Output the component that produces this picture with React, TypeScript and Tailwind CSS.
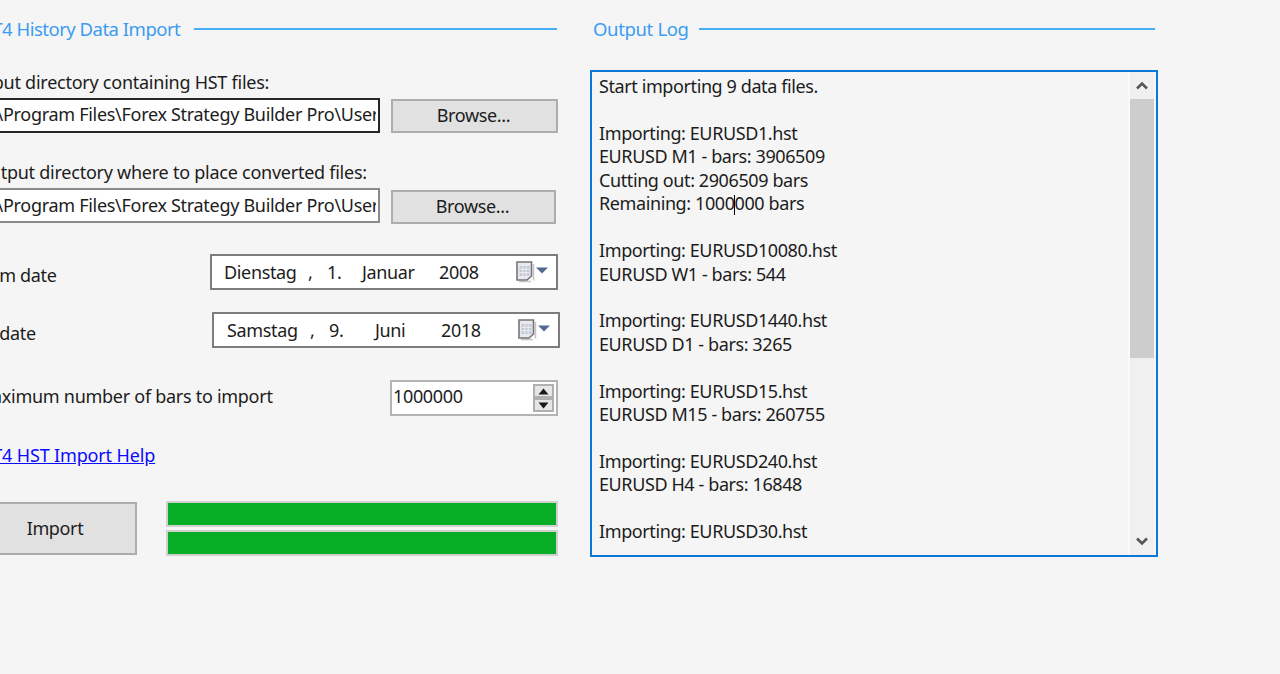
import React from "react";

const font = "font-['Noto_Sans','Open_Sans',sans-serif]";

function Heading({ text, gap, tracking }: { text: string; gap: string; tracking: string }) {
  return (
    <div className="flex items-center h-5">
      <span className={`text-[#3b9cf2] whitespace-nowrap text-[18.5px] ${tracking}`}>{text}</span>
      <div className={`flex-1 h-[2px] bg-[#45aef5] ${gap}`} />
    </div>
  );
}

function Calendar() {
  return (
    <svg width="34" height="22" viewBox="0 0 34 22" className="shrink-0">
      <path d="M17.5 19.5 L17.5 3 M3 20.5 H15" stroke="#c4c4c4" strokeWidth="1.5" />
      <path d="M1 1 H15.5 V15 L11 19 H1 Z" fill="#e9e9ee" stroke="#77737a" strokeWidth="1.6" />
      <rect x="3.5" y="5" width="10" height="10" fill="#c2c8d6" />
      <path d="M6.8 5v10M10.2 5v10M3.5 8.3h10M3.5 11.7h10" stroke="#eef0f4" strokeWidth="1" />
      <path d="M20 6.5h12l-6 6z" fill="#55688f" />
    </svg>
  );
}

function DateField({ parts, pl }: { parts: [string, string][]; pl: string }) {
  return (
    <div className={`flex items-center h-[36px] w-[348px] bg-white border-2 border-[#7d7d7d] ${pl} pr-[6px]`}>
      {parts.map(([t, w], i) => (
        <span key={i} className={`${w} whitespace-nowrap leading-none`}>{t}</span>
      ))}
      <div className="ml-auto flex items-center"><Calendar /></div>
    </div>
  );
}

function Browse({ w }: { w: string }) {
  return (
    <div className={`${w} h-[34px] ml-[11px] pb-[2px] pr-[2px] flex items-center justify-center bg-[#e1e1e1] border-2 border-[#adadad]`}>
      Browse...
    </div>
  );
}

function PathInput({ border, text }: { border: string; text: string }) {
  return (
    <div className={`w-[404px] h-[35px] bg-white border-2 ${border} pr-[2px] flex items-center`}>
      <span className={`block whitespace-nowrap overflow-hidden w-full pl-[3px] leading-[31px] tracking-[-0.3px] ${text}`}>
        C:\Program Files\Forex Strategy Builder Pro\User
      </span>
    </div>
  );
}

const log: string[] = [
  "Start importing 9 data files.",
  "",
  "Importing: EURUSD1.hst",
  "EURUSD M1 - bars: 3906509",
  "Cutting out: 2906509 bars",
  "@",
  "",
  "Importing: EURUSD10080.hst",
  "EURUSD W1 - bars: 544",
  "",
  "Importing: EURUSD1440.hst",
  "EURUSD D1 - bars: 3265",
  "",
  "Importing: EURUSD15.hst",
  "EURUSD M15 - bars: 260755",
  "",
  "Importing: EURUSD240.hst",
  "EURUSD H4 - bars: 16848",
  "",
  "Importing: EURUSD30.hst",
];

function Spin({ up }: { up: boolean }) {
  return (
    <div className="w-[21px] h-[14px] bg-[#e6e6e6] border-2 border-[#b0b0b0] flex items-center justify-center">
      <svg width="11" height="7" viewBox="0 0 11 7">
        <path d={up ? "M5.5 0.5 10.5 6.5H0.5z" : "M5.5 6.5 10.5 0.5H0.5z"} fill="#1a1a1a" />
      </svg>
    </div>
  );
}

export default function App() {
  return (
    <div className={`w-[1280px] h-[674px] overflow-hidden bg-[#f5f5f5] text-[#1c1c1c] text-[18px] tracking-[-0.35px] flex ${font}`}>
      {/* Left column */}
      <div className="w-[582px] shrink-0 -ml-[24px] pt-[19px]">
        <div className="mr-[1px]">
          <Heading text="MT4 History Data Import" gap="ml-[14px]" tracking="tracking-[-0.5px]" />
        </div>

        <div className="mt-[33px] h-5 leading-5 whitespace-nowrap tracking-[-0.25px]">Input directory containing HST files:</div>
        <div className="mt-[6px] flex items-start">
          <PathInput border="border-[#262626]" text="-mt-[2px]" />
          <div className="mt-[1px]"><Browse w="w-[167px]" /></div>
        </div>

        <div className="mt-[29px] h-5 leading-5 whitespace-nowrap tracking-[-0.25px]">Output directory where to place converted files:</div>
        <div className="mt-[6px] flex items-start">
          <PathInput border="border-[#8a8a8a]" text="" />
          <div className="mt-[2px]"><Browse w="w-[165px]" /></div>
        </div>

        <div className="mt-[30px] flex items-center">
          <span className="whitespace-nowrap mt-[6px] -ml-[3px]">From date</span>
          <div className="ml-auto">
            <DateField
              pl="pl-[12px]"
              parts={[
                ["Dienstag", "w-[84px]"],
                [",", "w-[19px]"],
                ["1.", "w-[35px]"],
                ["Januar", "w-[77px]"],
                ["2008", "w-[40px]"],
              ]}
            />
          </div>
        </div>
        <div className="mt-[22px] flex items-center -mr-[2px]">
          <span className="whitespace-nowrap mt-[6px]">To date</span>
          <div className="ml-auto">
            <DateField
              pl="pl-[13px]"
              parts={[
                ["Samstag", "w-[83px]"],
                [",", "w-[19px]"],
                ["9.", "w-[46px]"],
                ["Juni", "w-[66px]"],
                ["2018", "w-[40px]"],
              ]}
            />
          </div>
        </div>

        <div className="mt-[32px] flex items-center">
          <span className="whitespace-nowrap -mt-[4px] tracking-[-0.28px]">Maximum number of bars to import</span>
          <div className="ml-auto w-[168px] h-[36px] bg-white border-2 border-[#b4b4b4] flex items-center pl-[1px] pr-[2px]">
            <span className="-mt-[4px]">1000000</span>
            <div className="ml-auto flex flex-col">
              <Spin up />
              <Spin up={false} />
            </div>
          </div>
        </div>

        <div className="mt-[29px] h-5 leading-5 whitespace-nowrap text-[#0a0aff] underline tracking-[-0.15px]">MT4 HST Import Help</div>

        <div className="mt-[36px] flex items-start">
          <div className="w-[161px] h-[53px] mt-[1px] pr-[3px] flex items-center justify-center bg-[#e1e1e1] border-2 border-[#adadad]">
            Import
          </div>
          <div className="ml-[29px] flex-1 flex flex-col gap-[3px]">
            <div className="h-[26px] bg-[#06ae26] border-2 border-[#d0d0d0]" />
            <div className="h-[26px] bg-[#06ae26] border-2 border-[#d0d0d0]" />
          </div>
        </div>
      </div>

      {/* Right column */}
      <div className="w-[568px] shrink-0 ml-[32px] pt-[19px]">
        <div className="px-[3px]">
          <Heading text="Output Log" gap="ml-[10px]" tracking="" />
        </div>
        <div className="mt-[31px] h-[487px] border-2 border-[#0a78d7] flex">
          <div className="flex-1 min-w-0 pl-[7px] pt-[3px] border-r-2 border-[#fafafa] overflow-hidden leading-[23.45px] tracking-[-0.4px]">
            {log.map((l, i) =>
              l === "@" ? (
                <div key={i} className="h-[23.45px] whitespace-nowrap">
                  Remaining: 1000<span className="inline-block w-[1px] h-[20px] bg-black align-middle -mx-[0.5px]" />000 bars
                </div>
              ) : (
                <div key={i} className="h-[23.45px] whitespace-nowrap">{l}</div>
              )
            )}
          </div>
          <div className="w-[24px] mr-[2px] bg-[#f0f0f0] flex flex-col items-center shrink-0">
            <div className="h-[27px] w-full flex items-center justify-center">
              <svg width="12" height="9" viewBox="0 0 12 9"><path d="M1 7.5 6 2.5l5 5" fill="none" stroke="#555" strokeWidth="2.6" /></svg>
            </div>
            <div className="h-[259px] w-full bg-[#cdcdcd]" />
            <div className="flex-1" />
            <div className="h-[27px] w-full flex items-center justify-center">
              <svg width="12" height="9" viewBox="0 0 12 9"><path d="M1 1.5 6 6.5l5-5" fill="none" stroke="#555" strokeWidth="2.6" /></svg>
            </div>
          </div>
        </div>
      </div>
    </div>
  );
}
